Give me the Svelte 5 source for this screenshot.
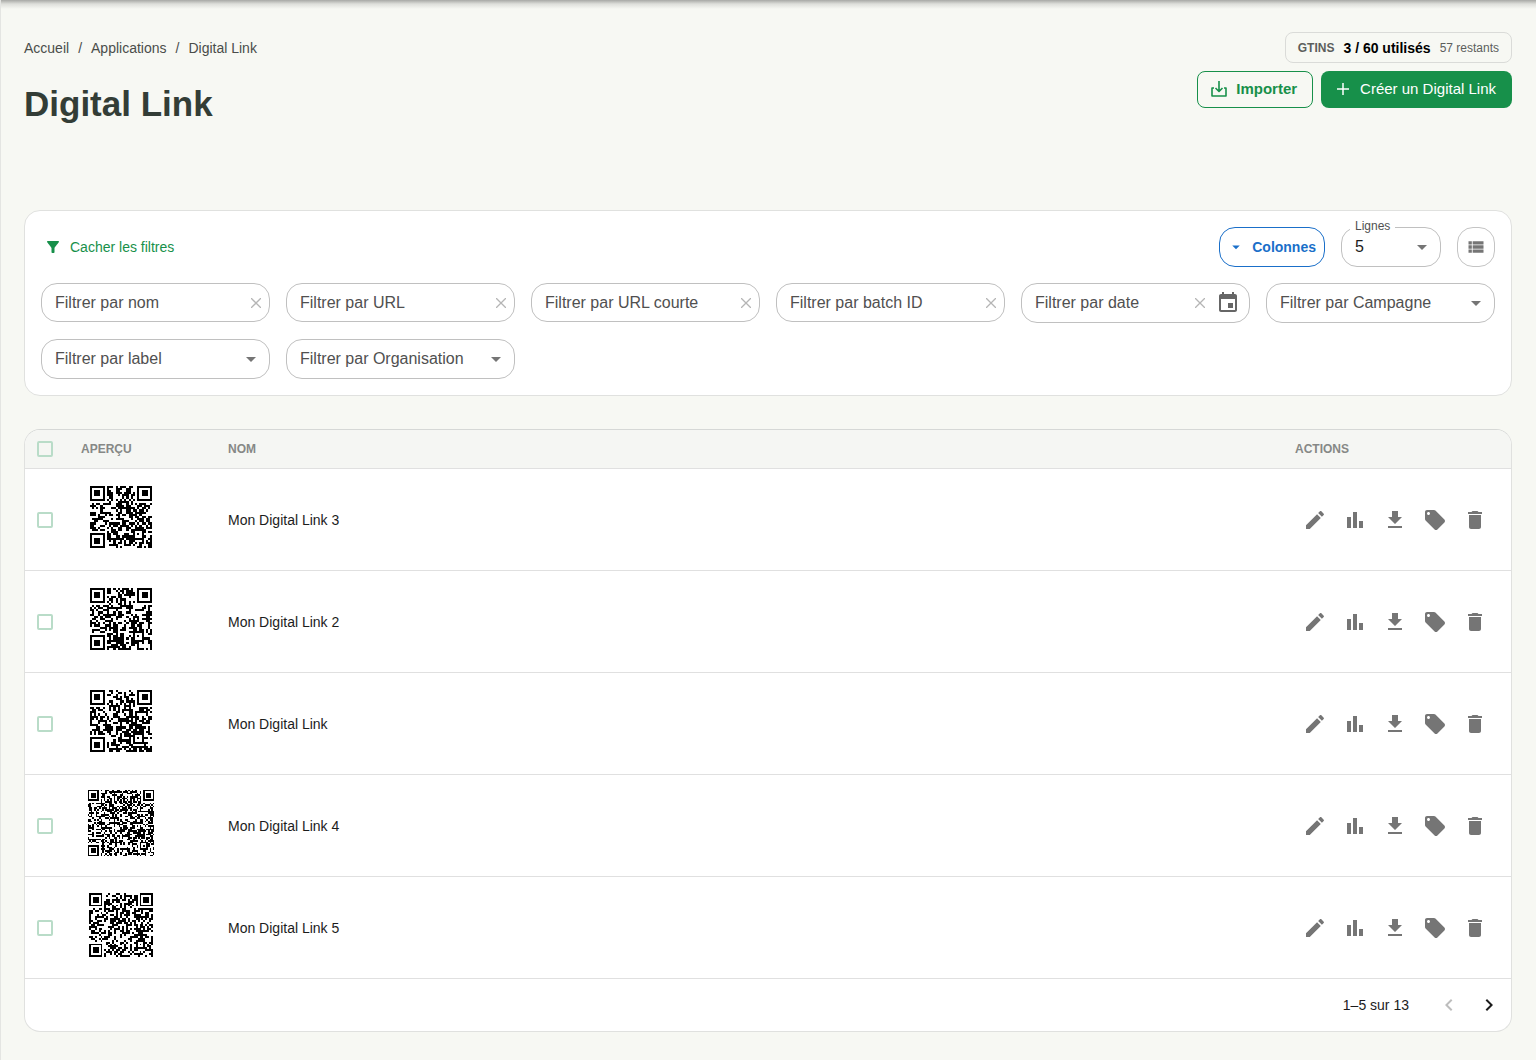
<script>
  const textFilters = [
    { id: 'nom', label: 'Filtrer par nom' },
    { id: 'url', label: 'Filtrer par URL' },
    { id: 'url-courte', label: 'Filtrer par URL courte' },
    { id: 'batch', label: 'Filtrer par batch ID' },
    { id: 'date', label: 'Filtrer par date', date: true },
  ];

  const selectFilters = [
    { id: 'campagne', label: 'Filtrer par Campagne' },
    { id: 'label', label: 'Filtrer par label' },
    { id: 'organisation', label: 'Filtrer par Organisation' },
  ];

  const rows = [
    { nom: 'Mon Digital Link 3', modules: 29, seed: 31 },
    { nom: 'Mon Digital Link 2', modules: 29, seed: 72 },
    { nom: 'Mon Digital Link', modules: 29, seed: 113 },
    { nom: 'Mon Digital Link 4', modules: 41, seed: 204 },
    { nom: 'Mon Digital Link 5', modules: 33, seed: 355 },
  ];

  const actions = [
    { label: 'Modifier', path: 'M3 17.25V21h3.75L17.81 9.94l-3.75-3.75L3 17.25zM20.71 7.04c.39-.39.39-1.02 0-1.41l-2.34-2.34c-.39-.39-1.02-.39-1.41 0l-1.83 1.83 3.75 3.75 1.83-1.83z' },
    { label: 'Statistiques', path: 'M4 9h4v11H4zm12 4h4v7h-4zm-6-9h4v16h-4z' },
    { label: 'Télécharger', path: 'M5 20h14v-2H5v2zM19 9h-4V3H9v6H5l7 7 7-7z' },
    { label: 'Labels', path: 'M21.41 11.58l-9-9C12.05 2.22 11.55 2 11 2H4c-1.1 0-2 .9-2 2v7c0 .55.22 1.05.59 1.42l9 9c.36.36.86.58 1.41.58.55 0 1.05-.22 1.41-.59l7-7c.37-.36.59-.86.59-1.41 0-.55-.23-1.06-.59-1.42zM5.5 7C4.67 7 4 6.33 4 5.5S4.67 4 5.5 4 7 4.67 7 5.5 6.33 7 5.5 7z' },
    { label: 'Supprimer', path: 'M6 19c0 1.1.9 2 2 2h8c1.1 0 2-.9 2-2V7H6v12zM19 4h-3.5l-1-1h-5l-1 1H5v2h14V4z' },
  ];

  let values = $state({ nom: '', url: '', 'url-courte': '', batch: '', date: '' });
  let showFilters = $state(true);
  let lignes = $state('5');
  let selected = $state(rows.map(() => false));
  let allSelected = $derived(selected.every(Boolean));

  function toggleAll() {
    const next = !allSelected;
    selected = rows.map(() => next);
  }

  // square ring patterns: finder is 7 wide, alignment is 5 wide
  function ring(x, y, size) {
    const d = Math.max(Math.abs(x - (size - 1) / 2), Math.abs(y - (size - 1) / 2));
    return size === 7 ? d !== 2 : d !== 1;
  }

  function qrPath(n, seed) {
    let s = seed * 7919;
    const random = () => {
      s = (s * 1103515245 + 12345) % 2147483648;
      return s / 2147483648;
    };
    const dark = (x, y) => {
      const bit = random() < 0.52;
      const left = x < 8;
      const right = x > n - 9;
      if (y < 8 && (left || right)) {
        const fx = left ? x : x - (n - 7);
        return fx >= 0 && fx < 7 && y < 7 && ring(fx, y, 7);
      }
      if (y > n - 9 && left) {
        const fy = y - (n - 7);
        return x < 7 && fy >= 0 && ring(x, fy, 7);
      }
      const a = n - 9;
      if (x >= a && x < a + 5 && y >= a && y < a + 5) return ring(x - a, y - a, 5);
      if (x === 6 || y === 6) return (x + y) % 2 === 0;
      return bit;
    };
    let d = '';
    for (let y = 0; y < n; y++) {
      for (let x = 0; x < n; x++) {
        if (dark(x, y)) d += `M${x + 4} ${y + 4}h1v1h-1z`;
      }
    }
    return d;
  }
</script>

{#snippet arrow()}
  <svg class="arrow" viewBox="0 0 24 24" aria-hidden="true"><path d="M7 10l5 5 5-5z" /></svg>
{/snippet}

<div class="page">
  <header class="page-header">
    <div>
      <nav class="breadcrumb" aria-label="Fil d'Ariane">
        <a href="#accueil">Accueil</a>
        <span>/</span>
        <a href="#applications">Applications</a>
        <span>/</span>
        <span>Digital Link</span>
      </nav>
      <h1>Digital Link</h1>
    </div>

    <div class="header-side">
      <div class="quota">
        <span class="quota-label">GTINS</span>
        <strong>3 / 60 utilisés</strong>
        <span class="quota-rest">57 restants</span>
      </div>
      <div class="header-btns">
        <button class="btn outlined">
          <svg width="18" height="18" viewBox="0 0 18 18" fill="none" stroke="currentColor" stroke-width="1.6" stroke-linejoin="round" aria-hidden="true">
            <path d="M4 8H2v8h14V8h-2M9 1v10M5.5 8L9 11.5 12.5 8" />
          </svg>
          Importer
        </button>
        <button class="btn filled">
          <svg width="14" height="14" viewBox="0 0 14 14" fill="none" stroke="currentColor" stroke-width="1.5" aria-hidden="true">
            <path d="M7 1v12M1 7h12" />
          </svg>
          Créer un Digital Link
        </button>
      </div>
    </div>
  </header>

  <section class="card filters">
    <div class="toolbar">
      <button class="toggle" onclick={() => (showFilters = !showFilters)}>
        <svg width="18" height="18" viewBox="0 0 24 24" aria-hidden="true">
          <path d="M4.25 5.61C6.27 8.2 10 13 10 13v6c0 .55.45 1 1 1h2c.55 0 1-.45 1-1v-6s3.72-4.8 5.74-7.39c.51-.66.04-1.61-.79-1.61H5.04c-.83 0-1.3.95-.79 1.61z" />
        </svg>
        {showFilters ? 'Cacher les filtres' : 'Afficher les filtres'}
      </button>
      <div class="toolbar-right">
        <button class="columns-btn">
          <svg width="18" height="18" viewBox="0 0 24 24" aria-hidden="true"><path d="M7 10l5 5 5-5z" /></svg>
          Colonnes
        </button>
        <div class="field select lines">
          <label for="lignes">Lignes</label>
          <select id="lignes" bind:value={lignes}>
            <option>5</option>
            <option>10</option>
            <option>25</option>
          </select>
          {@render arrow()}
        </div>
        <button class="view-btn" aria-label="Vue liste">
          <svg width="20" height="20" viewBox="0 0 24 24" aria-hidden="true">
            <path d="M3 14h4v-4H3v4zm0 5h4v-4H3v4zM3 9h4V5H3v4zm5 5h13v-4H8v4zm0 5h13v-4H8v4zM8 5v4h13V5H8z" />
          </svg>
        </button>
      </div>
    </div>

    {#if showFilters}
      <div class="filter-grid">
        {#each textFilters as f}
          <div class="field text" class:date={f.date}>
            <input type="text" id={f.id} aria-label={f.label} placeholder={f.label} bind:value={values[f.id]} />
            <button class="clear" aria-label="Effacer" onclick={() => (values[f.id] = '')}>
              <svg width="10" height="10" viewBox="0 0 10 10" fill="none" stroke="currentColor" stroke-width="1.3" aria-hidden="true">
                <path d="M0 0l10 10M10 0L0 10" />
              </svg>
            </button>
            {#if f.date}
              <button class="calendar" aria-label="Choisir une date">
                <svg width="24" height="24" viewBox="0 0 24 24" aria-hidden="true">
                  <path d="M17 12h-5v5h5v-5zM16 1v2H8V1H6v2H5c-1.11 0-1.99.9-1.99 2L3 19c0 1.1.89 2 2 2h14c1.1 0 2-.9 2-2V5c0-1.1-.9-2-2-2h-1V1h-2zm3 18H5V8h14v11z" />
                </svg>
              </button>
            {/if}
          </div>
        {/each}
        {#each selectFilters as f}
          <div class="field select">
            <select id={f.id} aria-label={f.label}>
              <option>{f.label}</option>
            </select>
            {@render arrow()}
          </div>
        {/each}
      </div>
    {/if}
  </section>

  <section class="card list">
    <table>
      <thead>
        <tr>
          <th class="check">
            <input type="checkbox" aria-label="Tout sélectionner" checked={allSelected} onchange={toggleAll} />
          </th>
          <th class="preview">Aperçu</th>
          <th>Nom</th>
          <th class="actions">Actions</th>
        </tr>
      </thead>
      <tbody>
        {#each rows as row, i}
          <tr>
            <td class="check">
              <input type="checkbox" aria-label={row.nom} bind:checked={selected[i]} />
            </td>
            <td class="preview">
              <svg class="qr" viewBox="0 0 {row.modules + 8} {row.modules + 8}" role="img" aria-label="QR code">
                <path d={qrPath(row.modules, row.seed)} />
              </svg>
            </td>
            <td>{row.nom}</td>
            <td class="actions">
              <div class="action-btns">
                {#each actions as action}
                  <button aria-label={action.label}>
                    <svg width="24" height="24" viewBox="0 0 24 24" aria-hidden="true"><path d={action.path} /></svg>
                  </button>
                {/each}
              </div>
            </td>
          </tr>
        {/each}
      </tbody>
    </table>

    <div class="pagination">
      <span>1–5 sur 13</span>
      <div class="pag-btns">
        <button disabled aria-label="Page précédente">
          <svg width="24" height="24" viewBox="0 0 24 24" aria-hidden="true"><path d="M15.41 7.41L14 6l-6 6 6 6 1.41-1.41L10.83 12z" /></svg>
        </button>
        <button aria-label="Page suivante">
          <svg width="24" height="24" viewBox="0 0 24 24" aria-hidden="true"><path d="M10 6L8.59 7.41 13.17 12l-4.58 4.59L10 18l6-6z" /></svg>
        </button>
      </div>
    </div>
  </section>
</div>

<style>
  :global(body) {
    background: #f7f8f3;
  }

  .page {
    box-sizing: border-box;
    min-height: 100vh;
    padding: 32px 24px 28px;
    background: linear-gradient(rgba(0, 0, 0, 0.32), rgba(0, 0, 0, 0.1) 4px, transparent 9px), #f7f8f3;
    box-shadow: inset 1px 0 #e4e5e2;
    font-family: "Liberation Sans", Helvetica, Arial, sans-serif;
    font-size: 14px;
    color: #1c1c1c;
  }

  .page * {
    box-sizing: border-box;
  }

  button,
  input,
  select {
    font-family: inherit;
    margin: 0;
  }

  button {
    display: inline-flex;
    align-items: center;
    justify-content: center;
    padding: 0;
    border: none;
    background: none;
    color: inherit;
    cursor: pointer;
  }

  svg { fill: currentColor; flex: none; }
  svg[fill="none"] { fill: none; }

  .page-header {
    display: flex;
    justify-content: space-between;
    align-items: flex-start;
    margin-bottom: 86px;
  }

  .breadcrumb {
    display: flex;
    gap: 9px;
    padding-top: 4px;
    line-height: 24px;
    color: #4a4d4a;
  }

  .breadcrumb a {
    color: inherit;
    text-decoration: none;
  }

  h1 {
    margin: 24px 0 0;
    font-size: 35px;
    line-height: 40px;
    font-weight: 700;
    color: #333d36;
  }

  .header-side {
    display: flex;
    flex-direction: column;
    align-items: flex-end;
    gap: 8px;
  }

  .quota {
    display: flex;
    align-items: center;
    gap: 9px;
    height: 31px;
    padding: 0 12px;
    border: 1px solid #dadbd8;
    border-radius: 8px;
    color: #000;
  }

  .quota-label {
    font-size: 12px;
    font-weight: 700;
    color: #5c5e5c;
  }

  .quota-rest {
    font-size: 12px;
    color: #5c5e5c;
  }

  .header-btns { display: flex; gap: 8px; }

  .btn {
    height: 37px;
    border-radius: 8px;
    font-size: 15px;
  }

  .btn.outlined {
    gap: 8px;
    padding: 0 15px 2px 12px;
    border: 1px solid #17904a;
    color: #17904a;
    font-weight: 700;
  }

  .btn.filled {
    gap: 10px;
    padding: 0 16px 2px 15px;
    background: #17904a;
    color: #fff;
  }

  .card {
    border: 1px solid #e0e1df;
    border-radius: 16px;
    background: #fff;
  }

  .filters {
    padding: 16px;
    margin-bottom: 33px;
  }

  .toolbar {
    display: flex;
    justify-content: space-between;
    align-items: center;
  }

  .toggle {
    gap: 8px;
    padding: 0 3px;
    font-size: 14px;
    color: #17904a;
  }

  .toolbar-right { display: flex; gap: 16px; }

  .columns-btn {
    gap: 7px;
    height: 40px;
    padding: 0 8px 0 7px;
    border: 1px solid #1a6fc9;
    border-radius: 16px;
    color: #1a6fc9;
    font-size: 14px;
    font-weight: 700;
  }

  .view-btn {
    width: 38px;
    height: 40px;
    border: 1px solid #c4c4c4;
    border-radius: 16px;
    color: #757575;
  }

  .filter-grid {
    display: grid;
    grid-template-columns: repeat(6, minmax(0, 1fr));
    align-items: start;
    gap: 16px;
    margin-top: 16px;
  }

  .field {
    position: relative;
    display: flex;
    align-items: center;
    height: 40px;
    border: 1px solid #c0c0c0;
    border-radius: 16px;
    color: #505050;
  }

  .field.text {
    height: 39px;
    padding: 0 8px 0 13px;
  }

  .field.date { height: 40px; padding-right: 9px; }

  .field input {
    flex: 1;
    min-width: 0;
    padding: 0;
    border: none;
    outline: none;
    background: none;
    font-size: 16px;
    color: #1c1c1c;
  }

  .field input::placeholder { color: #505050; opacity: 1; }

  .clear { color: #b5b5b5; }

  .calendar { margin-left: 11px; color: #666; }

  .field select {
    appearance: none;
    width: 100%;
    height: 100%;
    padding: 0 32px 1px 13px;
    border: none;
    border-radius: 16px;
    outline: none;
    background: none;
    font-size: 16px;
    color: inherit;
  }

  .arrow {
    position: absolute;
    right: 6px;
    width: 24px;
    height: 24px;
    color: #757575;
    pointer-events: none;
  }

  .lines { width: 100px; color: #1c1c1c; }

  .lines label {
    position: absolute;
    top: -10px;
    left: 8px;
    padding: 0 5px;
    background: #fff;
    font-size: 12px;
    line-height: 16px;
    color: #505050;
  }

  .list { overflow: hidden; border-top-color: #d6d8d6; }

  table {
    width: 100%;
    border-collapse: separate;
    border-spacing: 0;
  }

  th,
  td {
    padding: 0 16px;
    text-align: left;
    border-bottom: 1px solid #e0e0e0;
  }

  th {
    height: 39px;
    background: #f5f6f3;
    font-size: 12px;
    font-weight: 700;
    text-transform: uppercase;
    color: #868886;
  }

  td {
    height: 102px;
    font-size: 14px;
  }

  .check {
    width: 40px;
    padding: 0 12px;
  }

  .preview { width: 147px; }

  td.preview { padding-bottom: 6px; }

  .actions { width: 232px; }

  .check input {
    appearance: none;
    display: block;
    width: 16px;
    height: 16px;
    border: 2px solid #b9dcc8;
    border-radius: 2px;
    background: transparent;
    cursor: pointer;
  }

  .check input:checked { background: #17904a; border-color: #17904a; }

  .qr {
    display: block;
    width: 80px;
    height: 80px;
    color: #000;
    shape-rendering: crispEdges;
  }

  .action-btns { display: flex; color: #757575; }

  .action-btns button {
    width: 40px;
    height: 40px;
    border-radius: 50%;
  }

  .action-btns button:hover { background: rgba(0, 0, 0, 0.05); }

  .pagination {
    display: flex;
    justify-content: flex-end;
    align-items: center;
    gap: 20px;
    height: 52px;
    padding-right: 2px;
  }

  .pag-btns { display: flex; }

  .pag-btns button {
    width: 40px;
    height: 40px;
  }

  .pag-btns button:disabled { color: #bdbdbd; cursor: default; }
</style>
